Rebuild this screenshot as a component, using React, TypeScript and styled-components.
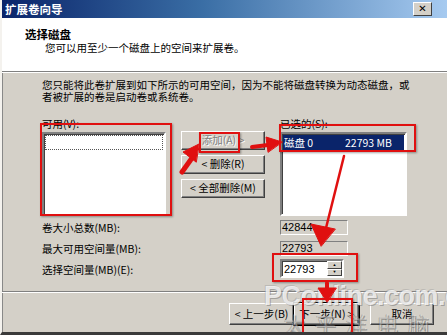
import React from "react";
import styled, { createGlobalStyle } from "styled-components";

const Global = createGlobalStyle`
  html, body { margin: 0; padding: 0; background: #d4d0c8; }
  body { font-family: "Noto Sans CJK SC", "DejaVu Sans", sans-serif; font-size: 10.5px; color: #000; }
  * { box-sizing: border-box; }
`;

const Window = styled.div`
  position: relative;
  width: 447px;
  height: 335px;
  overflow: hidden;
  background: #d4d0c8;
  border-left: 2px solid #f4f2ee;
  border-bottom: 3px solid #3a3a3a;
  display: flex;
  flex-direction: column;
  box-shadow: inset 1px 0 0 #888;
`;

const TitleBar = styled.div`
  height: 18px;
  flex: none;
  display: flex;
  align-items: center;
  justify-content: space-between;
  padding: 0 15px 0 3px;
  background: linear-gradient(to right, #0a246a 0%, #3a6ea5 45%, #a6caf0 100%);
  color: #fff;
  font-weight: bold;
  font-size: 11.5px;
  line-height: 18px;
`;

const CloseBox = styled.div`
  width: 19px;
  height: 14px;
  background: #d4d0c8;
  border: 1px solid;
  border-color: #fff #404040 #404040 #fff;
  display: flex;
  align-items: center;
  justify-content: center;
  color: #000;
  font-size: 10px;
  font-weight: bold;
  line-height: 1;
  font-family: "DejaVu Sans", sans-serif;
`;

const Header = styled.div`
  height: 54px;
  flex: none;
  background: #fff;
  border-bottom: 1px solid #808080;
  box-shadow: 0 1px 0 #fff;
  padding: 9px 0 0 23px;
`;

const HeaderTitle = styled.div`
  font-weight: bold;
  font-size: 11.5px;
  line-height: 14px;
`;

const HeaderSub = styled.div`
  padding-left: 20px;
  line-height: 14px;
`;

const Body = styled.div`
  flex: 1;
  padding: 7px 0 0 40px;
  display: flex;
  flex-direction: column;
`;

const Para = styled.div`
  width: 390px;
  line-height: 12px;
  white-space: nowrap;
`;

const ListArea = styled.div`
  margin-top: 15px;
  display: grid;
  grid-template-columns: 124px 84px 127px;
  column-gap: 15px;
`;

const ListCol = styled.div`
  display: flex;
  flex-direction: column;
`;

const Label = styled.div`
  line-height: 12px;
  height: 12px;
  margin-bottom: 2px;
`;

const ListBox = styled.div`
  height: 84px;
  background: #fff;
  border: 2px solid;
  border-color: #808080 #fff #fff #808080;
  box-shadow: inset 1px 1px 0 #404040;
  padding: 1px;
`;

const ListRow = styled.div<{ $selected?: boolean; $focus?: boolean }>`
  height: 15px;
  line-height: 15px;
  padding-left: 1px;
  display: flex;
  background: ${(p) => (p.$selected ? "#0a246a" : "transparent")};
  color: ${(p) => (p.$selected ? "#fff" : "#000")};
  border: ${(p) => (p.$focus ? "1px dotted #555" : "none")};
`;

const Cell = styled.span<{ $w: number }>`
  width: ${(p) => p.$w}px;
  white-space: pre;
`;

const ButtonCol = styled.div`
  padding-top: 13px;
  display: flex;
  flex-direction: column;
  gap: 5px;
`;

const Button = styled.div<{ $disabled?: boolean; $w?: number; $default?: boolean; $h?: number }>`
  width: ${(p) => (p.$w ? `${p.$w}px` : "100%")};
  height: ${(p) => (p.$h ? `${p.$h}px` : "19px")};
  flex: none;
  background: #d4d0c8;
  border: 1px solid;
  border-color: #fff #404040 #404040 #fff;
  box-shadow: inset -1px -1px 0 #808080;
  outline: ${(p) => (p.$default ? "1px solid #000" : "none")};
  display: flex;
  align-items: center;
  justify-content: center;
  white-space: pre;
  color: ${(p) => (p.$disabled ? "#808080" : "#000")};
  text-shadow: ${(p) => (p.$disabled ? "1px 1px 0 #fff" : "none")};
  line-height: 1;
`;

const FieldGrid = styled.div`
  margin-top: 4px;
  display: grid;
  grid-template-columns: 238px 68px;
  row-gap: 6px;
  align-items: center;
`;

const FieldLabel = styled.div`
  line-height: 14px;
`;

const ReadField = styled.div`
  height: 15px;
  border: 1px solid;
  border-color: #808080 #fff #fff #808080;
  line-height: 13px;
  padding-left: 1px;
  font-family: "Liberation Sans", sans-serif;
  font-size: 11px;
`;

const Spinner = styled.div`
  height: 19px;
  width: 64px;
  margin-top: -3px;
  background: #fff;
  border: 2px solid;
  border-color: #808080 #fff #fff #808080;
  box-shadow: inset 1px 1px 0 #404040;
  display: flex;
  align-items: center;
  font-family: "Liberation Sans", sans-serif;
  font-size: 11px;
  padding-left: 2px;
  justify-content: space-between;
`;

const SpinArrows = styled.div`
  width: 15px;
  height: 15px;
  display: flex;
  flex-direction: column;
`;

const SpinBtn = styled.div`
  flex: 1;
  background: #d4d0c8;
  border: 1px solid;
  border-color: #fff #404040 #404040 #fff;
  display: flex;
  align-items: center;
  justify-content: center;
  font-size: 4px;
  line-height: 1;
`;

const Footer = styled.div`
  height: 41px;
  flex: none;
  border-top: 1px solid #808080;
  box-shadow: inset 0 1px 0 #fff;
  display: flex;
  justify-content: flex-end;
  align-items: center;
  padding-right: 13px;
  padding-top: 4px;
`;

const NavGroup = styled.div`
  display: flex;
  align-items: center;
  margin-right: 11px;
`;

const Overlay = styled.div<{ $x: number; $y: number; $w: number; $h: number }>`
  position: absolute;
  left: ${(p) => p.$x}px;
  top: ${(p) => p.$y}px;
  width: ${(p) => p.$w}px;
  height: ${(p) => p.$h}px;
  border: 2px solid #e01010;
  box-shadow: 1px 1px 2px rgba(0, 0, 0, 0.35);
  pointer-events: none;
`;

const ArrowLayer = styled.svg`
  position: absolute;
  left: 0;
  top: 0;
  width: 447px;
  height: 335px;
  pointer-events: none;
`;

const Watermark = styled.div`
  position: absolute;
  left: 262px;
  top: 283px;
  color: rgba(255, 255, 255, 0.75);
  font-family: "Liberation Sans", sans-serif;
  font-size: 27px;
  font-weight: bold;
  letter-spacing: -0.5px;
  pointer-events: none;
  text-shadow: 1px 1px 0 rgba(120, 120, 120, 0.55), -1px -1px 0 rgba(150, 150, 150, 0.4);
  line-height: 1;
`;

const WatermarkCn = styled.div`
  position: absolute;
  left: 282px;
  top: 313px;
  color: rgba(255, 255, 255, 0.35);
  font-size: 21px;
  letter-spacing: 10px;
  pointer-events: none;
  line-height: 1;
  text-shadow: 1px 1px 0 rgba(80, 80, 80, 0.45), -1px 0 0 rgba(80, 80, 80, 0.3);
`;

export default function App() {
  return (
    <>
      <Global />
      <Window>
        <TitleBar>
          <span>扩展卷向导</span>
          <CloseBox>✕</CloseBox>
        </TitleBar>
        <Header>
          <HeaderTitle>选择磁盘</HeaderTitle>
          <HeaderSub>您可以用至少一个磁盘上的空间来扩展卷。</HeaderSub>
        </Header>
        <Body>
          <Para>
            您只能将此卷扩展到如下所示的可用空间，因为不能将磁盘转换为动态磁盘，或
            <br />
            者被扩展的卷是启动卷或系统卷。
          </Para>
          <ListArea>
            <ListCol>
              <Label>可用(V):</Label>
              <ListBox>
                <ListRow $focus />
              </ListBox>
            </ListCol>
            <ButtonCol>
              <Button $disabled>添加(A) &gt;</Button>
              <Button>&lt; 删除(R)</Button>
              <Button>&lt; 全部删除(M)</Button>
            </ButtonCol>
            <ListCol>
              <Label>已选的(S):</Label>
              <ListBox>
                <ListRow $selected>
                  <Cell $w={62}>磁盘 0</Cell>
                  <Cell $w={60}>22793 MB</Cell>
                </ListRow>
              </ListBox>
            </ListCol>
          </ListArea>
          <FieldGrid>
            <FieldLabel>卷大小总数(MB):</FieldLabel>
            <ReadField>42844</ReadField>
            <FieldLabel>最大可用空间量(MB):</FieldLabel>
            <ReadField>22793</ReadField>
            <FieldLabel>选择空间量(MB)(E):</FieldLabel>
            <Spinner>
              <span>22793</span>
              <SpinArrows>
                <SpinBtn>▲</SpinBtn>
                <SpinBtn>▼</SpinBtn>
              </SpinArrows>
            </Spinner>
          </FieldGrid>
        </Body>
        <Footer>
          <NavGroup>
            <Button $w={65} $h={22}>&lt; 上一步(B)</Button>
            <Button $w={65} $h={22} $default>下一步(N) &gt;</Button>
          </NavGroup>
          <Button $w={64} $h={22}>取消</Button>
        </Footer>

        <Watermark>PConline.com.cn</Watermark>
        <WatermarkCn>太平洋电脑网</WatermarkCn>

        <Overlay $x={38} $y={123} $w={132} $h={93} />
        <Overlay $x={197} $y={132} $w={41} $h={21} />
        <Overlay $x={277} $y={124} $w={137} $h={28} />
        <Overlay $x={270} $y={253} $w={86} $h={29} />
        <Overlay $x={300} $y={298} $w={51} $h={36} />

        <ArrowLayer viewBox="0 0 447 335">
          <g fill="#e01010" stroke="#e01010" strokeLinecap="round">
            <line x1="180" y1="172" x2="190" y2="158" strokeWidth="5" />
            <polygon points="197,144 181,152 194,162" strokeWidth="1" />
            <line x1="250" y1="147" x2="266" y2="145" strokeWidth="4" />
            <polygon points="280,142 264,137 266,152" strokeWidth="1" />
            <line x1="342" y1="156" x2="324" y2="228" strokeWidth="2.5" />
            <polygon points="319,246 309,224 333,229" strokeWidth="1" />
            <line x1="325" y1="283" x2="325" y2="290" strokeWidth="4" />
            <polygon points="325,302 316,288 334,288" strokeWidth="1" />
          </g>
        </ArrowLayer>
      </Window>
    </>
  );
}
